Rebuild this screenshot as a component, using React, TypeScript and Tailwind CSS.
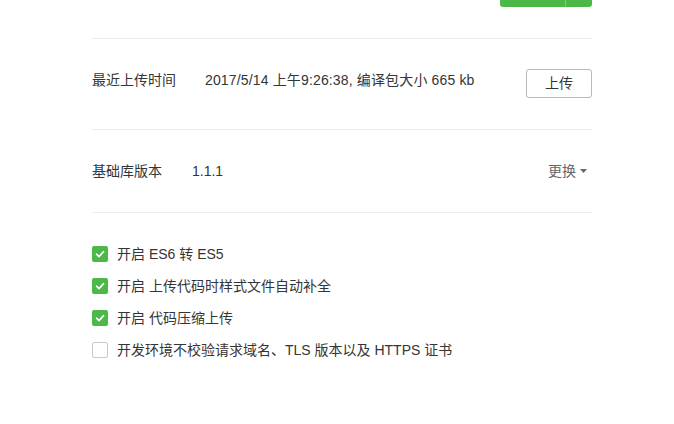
import React from "react";

const font = { fontFamily: '"Liberation Sans", "Noto Sans CJK SC", sans-serif' };

function Check({ checked }: { checked: boolean }) {
  if (checked) {
    return (
      <span className="flex h-[16px] w-[16px] shrink-0 items-center justify-center rounded-[2px] bg-[#4cb848]">
        <svg width="12" height="12" viewBox="0 0 12 12">
          <path d="M2.5 6.2 L5 8.6 L9.6 3.6" fill="none" stroke="#fff" strokeWidth="1.6" strokeLinecap="round" strokeLinejoin="round" />
        </svg>
      </span>
    );
  }
  return <span className="h-[16px] w-[16px] shrink-0 rounded-[2px] border border-[#c9c9c9] bg-white" />;
}

export default function App() {
  const opts = [
    { c: true, t: "开启 ES6 转 ES5" },
    { c: true, t: "开启 上传代码时样式文件自动补全" },
    { c: true, t: "开启 代码压缩上传" },
    { c: false, t: "开发环境不校验请求域名、TLS 版本以及 HTTPS 证书" },
  ];
  return (
    <div className="h-[424px] w-[674px] bg-white text-[#353535]" style={font}>
      <div className="ml-[92px] w-[500px]">
        <div className="flex justify-end">
          <div className="flex h-[7px] w-[92px] overflow-hidden rounded-b-[3px] bg-[#4cb848]">
            <div className="w-[66px] border-r border-[#7ccd78]" />
          </div>
        </div>
        <div className="h-[31px]" />
        <div className="border-t border-[#ececec]" />
        <div className="flex items-start pb-[31px] pt-[30px] text-[14px]">
          <span className="w-[113px] leading-[22px]">最近上传时间</span>
          <span className="flex-1 leading-[22px] tracking-[0.15px]">2017/5/14 上午9:26:38, 编译包大小 665 kb</span>
          <button className="h-[29px] w-[66px] rounded-[3px] border border-[#b8b8b8] bg-white text-[14px] text-[#353535]">上传</button>
        </div>
        <div className="border-t border-[#ececec]" />
        <div className="flex items-center py-[30px] text-[14px] leading-[22px]">
          <span className="w-[100px]">基础库版本</span>
          <span className="flex-1">1.1.1</span>
          <span className="flex items-center gap-[4px] pr-[5px] text-[#666]">
            更换
            <svg width="7" height="4" viewBox="0 0 7 4"><path d="M0 0 H7 L3.5 4 Z" fill="#666" /></svg>
          </span>
        </div>
        <div className="border-t border-[#ececec]" />
        <div className="pt-[25px]">
          {opts.map((o, i) => (
            <div key={i} className="flex h-[32px] items-center gap-[9px] text-[14px]">
              <Check checked={o.c} />
              <span>{o.t}</span>
            </div>
          ))}
        </div>
      </div>
    </div>
  );
}
